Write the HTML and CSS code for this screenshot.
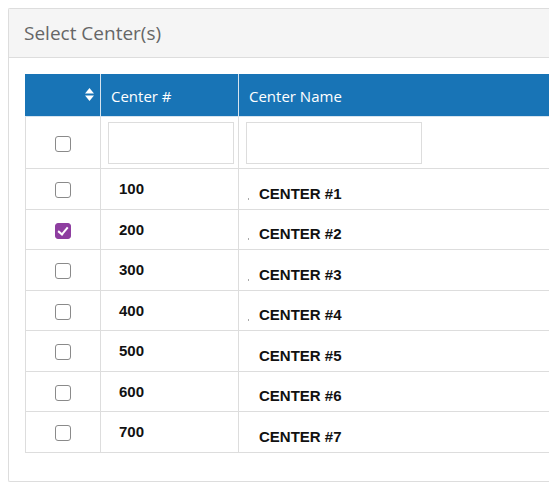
FILE: index.html
```html
<!DOCTYPE html>
<html lang="en">
<head>
  <meta charset="UTF-8">
  <title>Select Center(s)</title>
  <link rel="stylesheet" href="styles.css">
</head>
<body>

<div class="panel">
  <div class="panel-heading">Select Center(s)</div>
  <div class="panel-body">
    <table class="centers">
      <thead>
        <tr>
          <th class="col-check">
            <svg class="sort" width="9" height="13" viewBox="0 0 9 13">
              <path d="M4.5 0 L9 5.5 L0 5.5 Z" fill="#fff"/>
              <path d="M0 7.5 L9 7.5 L4.5 13 Z" fill="#fff"/>
            </svg>
          </th>
          <th class="col-num">Center #</th>
          <th class="col-name">Center Name</th>
        </tr>
      </thead>
      <tbody>
        <tr class="filter">
          <td class="col-check"><span class="box"></span></td>
          <td><input type="text" class="num-filter"></td>
          <td class="col-name"><input type="text" class="name-filter"></td>
        </tr>
        <tr>
          <td class="col-check"><span class="box"></span></td>
          <td class="num">100</td>
          <td class="name col-name"><span class="mark"></span>CENTER #1</td>
        </tr>
        <tr>
          <td class="col-check"><span class="box checked"></span></td>
          <td class="num">200</td>
          <td class="name col-name"><span class="mark"></span>CENTER #2</td>
        </tr>
        <tr>
          <td class="col-check"><span class="box"></span></td>
          <td class="num">300</td>
          <td class="name col-name"><span class="mark"></span>CENTER #3</td>
        </tr>
        <tr>
          <td class="col-check"><span class="box"></span></td>
          <td class="num">400</td>
          <td class="name col-name"><span class="mark"></span>CENTER #4</td>
        </tr>
        <tr>
          <td class="col-check"><span class="box"></span></td>
          <td class="num">500</td>
          <td class="name col-name"><span class="mark blank"></span>CENTER #5</td>
        </tr>
        <tr>
          <td class="col-check"><span class="box"></span></td>
          <td class="num">600</td>
          <td class="name col-name"><span class="mark blank"></span>CENTER #6</td>
        </tr>
        <tr>
          <td class="col-check"><span class="box"></span></td>
          <td class="num">700</td>
          <td class="name col-name"><span class="mark blank"></span>CENTER #7</td>
        </tr>
      </tbody>
    </table>
  </div>
</div>

</body>
</html>
```

FILE: styles.css
```css
html {
  overflow: hidden;
}
body {
  margin: 8px 0 8px 8px;
  background: #fff;
  font-family: "Open Sans", "Liberation Sans", Arial, sans-serif;
}
.panel {
  width: 620px;
  border: 1px solid #ddd;
  border-right: none;
  border-radius: 2px 0 0 2px;
}
.panel-heading {
  height: 49px;
  box-sizing: border-box;
  padding: 0 15px 1px 15px;
  display: flex;
  align-items: center;
  background: #f5f5f5;
  border-bottom: 1px solid #ddd;
  color: #666;
  font-size: 19px;
}
.panel-body {
  padding: 16px 0 28px 16px;
}
.centers {
  width: 604px;
  border-collapse: collapse;
  border: 1px solid #ddd;
  border-right: none;
}
.centers th,
.centers td {
  border: 1px solid #ddd;
  padding: 0;
  text-align: left;
}
.centers .col-name {
  border-right: none;
}
.centers th {
  background: #1874b6;
  color: #fff;
  font-weight: normal;
  font-size: 15px;
  height: 41px;
  padding: 0 10px;
  border-color: #d6e4ef;
  border-top-color: #1874b6;
}
.centers th.col-check {
  text-align: right;
  padding: 0 6px 6px 0;
  border-left-color: #1874b6;
}
.sort {
  display: inline-block;
  vertical-align: middle;
}
.col-check {
  width: 75px;
  box-sizing: border-box;
}
.centers td.col-check {
  text-align: center;
}
.col-num {
  width: 138px;
  box-sizing: border-box;
}
.centers tbody td {
  height: 39.5px;
  padding: 0;
}
.centers .filter td {
  height: 51px;
}
.filter input {
  display: block;
  box-sizing: border-box;
  height: 42px;
  margin: 1px 0 0 7px;
  border: 1px solid #ddd;
  background: #fff;
}
.num-filter {
  width: 126px;
}
.name-filter {
  width: 176px;
}
.box {
  display: inline-block;
  width: 16px;
  height: 16px;
  box-sizing: border-box;
  border: 1px solid #8a8a8a;
  border-radius: 3px;
  vertical-align: middle;
  position: relative;
}
.box.checked {
  background: #8e3ea0;
  border-color: #8e3ea0;
}
.box.checked::after {
  content: "";
  position: absolute;
  left: 4px;
  top: 1px;
  width: 4px;
  height: 8px;
  border: solid #fff;
  border-width: 0 2.5px 2.5px 0;
  transform: rotate(40deg);
}
.num,
.name {
  font-family: "Liberation Sans", Arial, sans-serif;
  font-weight: bold;
  font-size: 15px;
  color: #111;
}
.centers td.num {
  padding-left: 18px;
}
.centers td.name {
  height: 30.5px;
  padding: 9px 0 0 9px;
}
.mark {
  display: inline-block;
  width: 1px;
  height: 2px;
  margin-right: 10px;
  background: #aaa;
  vertical-align: -1px;
}
.mark.blank {
  background: transparent;
}
```
